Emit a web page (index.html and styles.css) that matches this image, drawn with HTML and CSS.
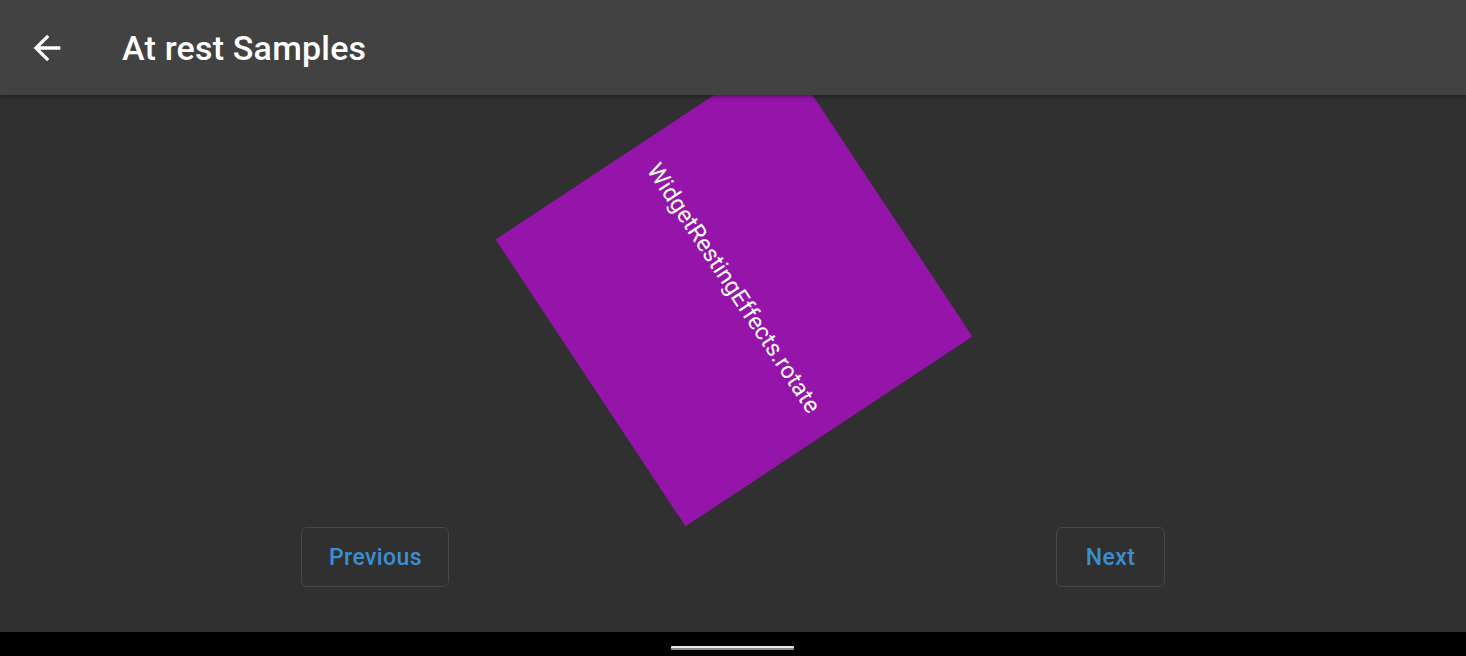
FILE: index.html
```html
<!DOCTYPE html>
<html>
<head>
<meta charset="utf-8">
<link rel="stylesheet" href="styles.css">
</head>
<body>
<div class="screen">
  <header class="appbar">
    <button class="back" aria-label="Back">
      <svg viewBox="0 0 24 24" width="40" height="40"><path fill="#fff" d="M20 11H7.83l5.59-5.59L12 4l-8 8 8 8 1.41-1.41L7.83 13H20v-2z"/></svg>
    </button>
    <h1 class="title">At rest Samples</h1>
  </header>
  <main class="content">
    <div class="stage">
      <div class="box">
        <span class="box-label">WidgetRestingEffects.rotate</span>
      </div>
    </div>
    <div class="nav">
      <button class="btn btn-prev">Previous</button>
      <button class="btn btn-next">Next</button>
    </div>
  </main>
  <footer class="sysbar">
    <div class="handle"></div>
  </footer>
</div>
</body>
</html>
```

FILE: styles.css
```css
html, body {
  margin: 0;
  padding: 0;
  width: 1466px;
  height: 656px;
  overflow: hidden;
  background: #303030;
  font-family: Roboto, "Noto Sans", sans-serif;
}
.screen {
  display: flex;
  flex-direction: column;
  width: 1466px;
  height: 656px;
}
.appbar {
  position: relative;
  z-index: 2;
  flex: 0 0 95px;
  display: flex;
  align-items: center;
  background: #424242;
  box-shadow: 0 2px 4px rgba(0, 0, 0, 0.35);
  padding-left: 27px;
  box-sizing: border-box;
}
.back {
  width: 40px;
  height: 40px;
  padding: 0;
  border: 0;
  background: none;
  display: flex;
}
.title {
  margin: 0 0 0 55px;
  color: #fff;
  font-size: 34px;
  font-weight: 500;
  letter-spacing: 0.2px;
}
.content {
  flex: 1;
  display: flex;
  flex-direction: column;
  background: #303030;
}
.stage {
  flex: 0 0 386px;
  display: flex;
  align-items: center;
  justify-content: center;
}
.box {
  flex: 0 0 344px;
  height: 344px;
  background: #9514a9;
  transform: rotate(56.5deg);
  display: flex;
  align-items: center;
  justify-content: center;
  margin-left: 1px;
}
.box-label {
  color: #fff;
  font-size: 23.5px;
  font-weight: 400;
  white-space: nowrap;
}
.nav {
  margin-top: 46px;
  padding: 0 301px;
  display: flex;
  justify-content: space-between;
}
.btn {
  height: 60px;
  padding: 0 27px;
  background: transparent;
  border: 1px solid #484848;
  border-radius: 6px;
  color: #3a8fd3;
  font-family: Roboto, "Noto Sans", sans-serif;
  font-size: 23px;
  font-weight: 500;
  letter-spacing: 0.4px;
}
.btn-prev { width: 148px; }
.btn-next { width: 109px; }
.sysbar {
  flex: 0 0 24px;
  background: #000;
  display: flex;
  justify-content: center;
  align-items: flex-start;
}
.handle {
  margin-top: 14px;
  margin-left: -2px;
  width: 123px;
  height: 4px;
  border-radius: 1px;
  background: linear-gradient(#e8e8e8 0 50%, #8a8a8a 50% 100%);
}
```
